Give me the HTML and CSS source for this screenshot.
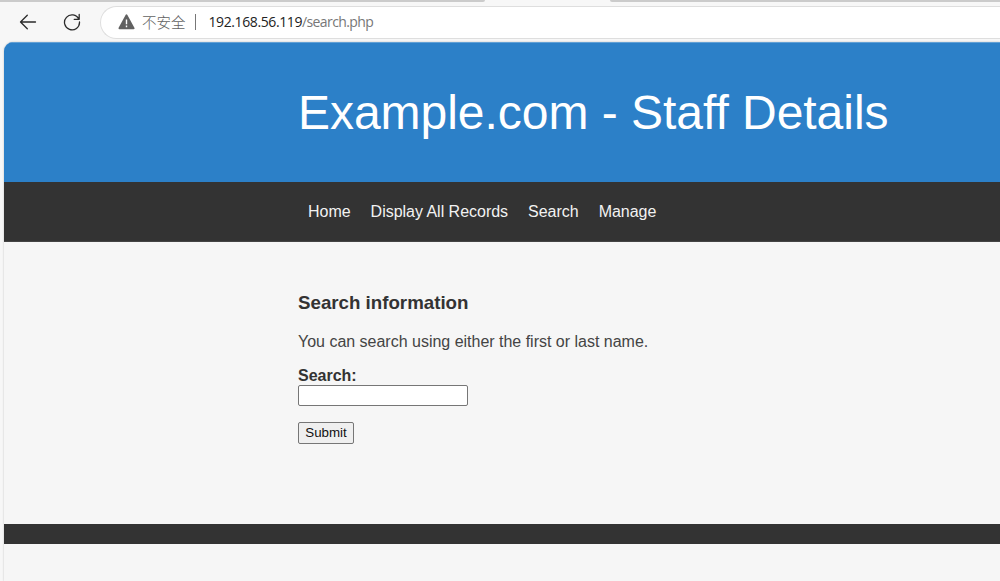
FILE: index.html
```html
<!DOCTYPE html>
<html lang="en">
<head>
<meta charset="utf-8">
<title>Example.com - Staff Details</title>
<link rel="stylesheet" href="styles.css">
</head>
<body>
<div class="tabstrip"><span class="tab tab-left"></span><span class="tab-gap"></span><span class="tab tab-right"></span></div>
<div class="toolbar">
  <svg class="icon back" width="18" height="16" viewBox="0 0 18 16"><path d="M16.5 8H1.5M8.3 1.2 1.5 8l6.8 6.8"/></svg>
  <svg class="icon reload" width="18" height="18" viewBox="0 0 18 18"><path d="M15.8 6.2A7.5 7.5 0 1 0 16.5 9M16.2 1.5v4.8h-5"/></svg>
  <div class="address">
    <svg class="warning" width="17" height="16" viewBox="0 0 17 16"><path class="triangle" d="M8.5 1.2 15.6 14.3H1.4Z"/><path class="mark" d="M8.5 5.5v4.7M8.5 11.6v1.6"/></svg>
    <span class="insecure">不安全</span>
    <span class="divider"></span>
    <span class="url"><span class="host">192.168.56.119</span><span class="path">/search.php</span></span>
  </div>
</div>
<div class="page">
  <header class="banner"><h1>Example.com - Staff Details</h1></header>
  <nav class="nav"><a>Home</a><a>Display All Records</a><a>Search</a><a>Manage</a></nav>
  <main class="content">
    <h3>Search information</h3>
    <p>You can search using either the first or last name.</p>
    <form>
      <label for="q">Search:</label>
      <input class="field" id="q" type="text">
      <button class="submit" type="button">Submit</button>
    </form>
  </main>
  <footer class="footer"></footer>
</div>
</body>
</html>
```
FILE: styles.css
```css
* { box-sizing: border-box; }
body {
  margin: 0;
  height: 581px;
  overflow: hidden;
  display: flex;
  flex-direction: column;
  background: #f7f7f7;
  font-family: "Liberation Sans", Arial, sans-serif;
}
.tabstrip { display: flex; height: 2px; }
.tab { background: #cbcbcb; }
.tab-left { width: 485px; border-bottom-right-radius: 4px; }
.tab-gap { width: 125px; }
.tab-right { flex: 1; border-bottom-left-radius: 4px; }
.toolbar {
  display: flex;
  align-items: center;
  height: 40px;
  padding: 0 0 0 19px;
}
.icon { fill: none; stroke: #2b2b2b; stroke-width: 1.3; stroke-linecap: round; stroke-linejoin: round; }
.reload { margin: 0 19px 0 26px; }
.address {
  flex: 1;
  display: flex;
  align-items: center;
  height: 33px;
  padding-left: 17px;
  border: 1px solid #dedede;
  border-right: 0;
  border-radius: 17px 0 0 17px;
  background: #fff;
}
.triangle { fill: #616161; stroke: #616161; stroke-width: 1.8; stroke-linejoin: round; }
.mark { stroke: #fff; stroke-width: 1.4; }
.insecure { margin-left: 7px; font: 14.5px/20px "Noto Sans CJK SC", sans-serif; font-weight: 300; color: #626262; }
.divider { width: 1px; height: 16px; margin: 0 13px 0 9px; background: #777; }
.url { font: 14px/20px "Open Sans", "Noto Sans", sans-serif; letter-spacing: -0.6px; }
.host { color: #222; letter-spacing: -0.4px; }
.path { color: #777; }
.page {
  flex: 1;
  margin-left: 4px;
  border-top-left-radius: 9px;
  overflow: hidden;
  background: #f6f6f6;
  box-shadow: 0 0 2px #bbb;
}
.banner {
  display: flex;
  align-items: center;
  height: 140px;
  padding: 1px 0 0 294px;
  border-top: 1px solid #62a0d5;
  background: #2c80c8;
}
.banner h1 { margin: 0; font-size: 48px; font-weight: 400; line-height: 56px; letter-spacing: -0.03px; color: #fff; }
.nav {
  display: flex;
  align-items: center;
  gap: 20px;
  height: 60px;
  padding: 0 0 0 304px;
  background: #333;
  border-bottom: 1px solid #444;
  color: #f2f2f2;
  font-size: 16px;
  letter-spacing: -0.02px;
}
.content { height: 282px; padding: 50px 0 0 294px; color: #333; }
.content h3 { margin: 0; font-size: 18.72px; line-height: 22px; }
.content p { margin: 18px 0 0; font-size: 16px; line-height: 20px; letter-spacing: -0.01px; color: #444; }
form { display: flex; flex-direction: column; align-items: flex-start; }
label { height: 19px; margin-top: 14px; font-size: 16px; font-weight: 700; line-height: 20px; }
.field { width: 170px; height: 21px; border: 1px solid #767676; border-radius: 2px; background: #fff; }
.submit {
  width: 56px;
  height: 22px;
  margin-top: 16px;
  padding: 0;
  border: 1px solid #767676;
  border-radius: 2px;
  background: #efefef;
  color: #111;
  font: 13.33px/18px "Liberation Sans", Arial, sans-serif;
}
.footer { height: 20px; background: #333; }
```
